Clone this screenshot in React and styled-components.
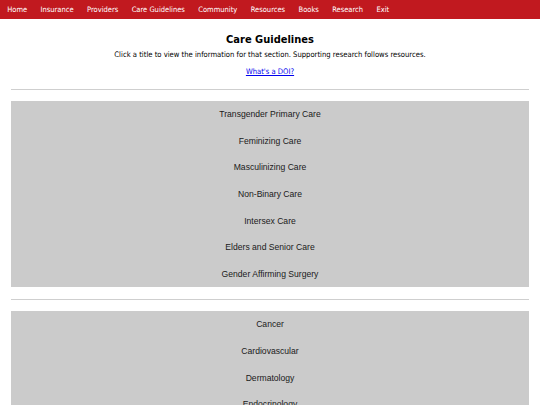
import React from "react";
import styled, { createGlobalStyle } from "styled-components";

const GlobalStyle = createGlobalStyle`
  body {
    margin: 0;
    background: #fff;
    font-family: "DejaVu Sans Condensed", "DejaVu Sans", Verdana, sans-serif;
  }
`;

const navLinks = [
  "Home",
  "Insurance",
  "Providers",
  "Care Guidelines",
  "Community",
  "Resources",
  "Books",
  "Research",
  "Exit",
];

const groups = [
  [
    "Transgender Primary Care",
    "Feminizing Care",
    "Masculinizing Care",
    "Non-Binary Care",
    "Intersex Care",
    "Elders and Senior Care",
    "Gender Affirming Surgery",
  ],
  ["Cancer", "Cardiovascular", "Dermatology", "Endocrinology", "Gastroenterology"],
];

const App = () => {
  return (
    <>
      <GlobalStyle />
      <Nav>
        {navLinks.map((link) => (
          <NavLink key={link} href="#">
            {link}
          </NavLink>
        ))}
      </Nav>
      <Main>
        <Title>Care Guidelines</Title>
        <Intro>
          Click a title to view the information for that section. Supporting
          research follows resources.
        </Intro>
        <DoiLink href="#">What's a DOI?</DoiLink>
        {groups.map((group, index) => (
          <Group key={index}>
            <Rule />
            <Panel>
              {group.map((title) => (
                <Item key={title}>{title}</Item>
              ))}
            </Panel>
          </Group>
        ))}
      </Main>
    </>
  );
};

const Nav = styled.nav`
  display: flex;
  align-items: center;
  height: 19px;
  padding-left: 0.5px;
  background-color: #c1191f;
`;

const NavLink = styled.a`
  padding: 0 6.7px;
  color: #fff;
  font-size: 7.5px;
  text-decoration: none;
  white-space: nowrap;
`;

const Main = styled.main`
  display: flex;
  flex-direction: column;
  align-items: center;
  padding: 0 11px;
`;

const Title = styled.h1`
  margin: 14px 0 0;
  font-size: 11px;
  font-weight: 700;
  line-height: 14px;
  color: #000;
`;

const Intro = styled.p`
  margin: 3px 0 0;
  font-size: 7.6px;
  line-height: 10px;
  color: #000;
`;

const DoiLink = styled.a`
  margin-top: 7px;
  font-size: 7.6px;
  line-height: 10px;
  color: #0000ee;
`;

const Group = styled.section`
  width: 100%;
  display: flex;
  flex-direction: column;
`;

const Rule = styled.hr`
  width: 100%;
  margin: 12px 0 11px;
  border: none;
  border-top: 1px solid #cfcfcf;
`;

const Panel = styled.div`
  display: flex;
  flex-direction: column;
  background-color: #cbcbcb;
`;

const Item = styled.button`
  height: 26.6px;
  padding: 0;
  border: none;
  background: none;
  font-family: "Liberation Sans", Arial, sans-serif;
  font-size: 8.6px;
  color: #1a1a1a;
  cursor: pointer;
`;

export default App;
